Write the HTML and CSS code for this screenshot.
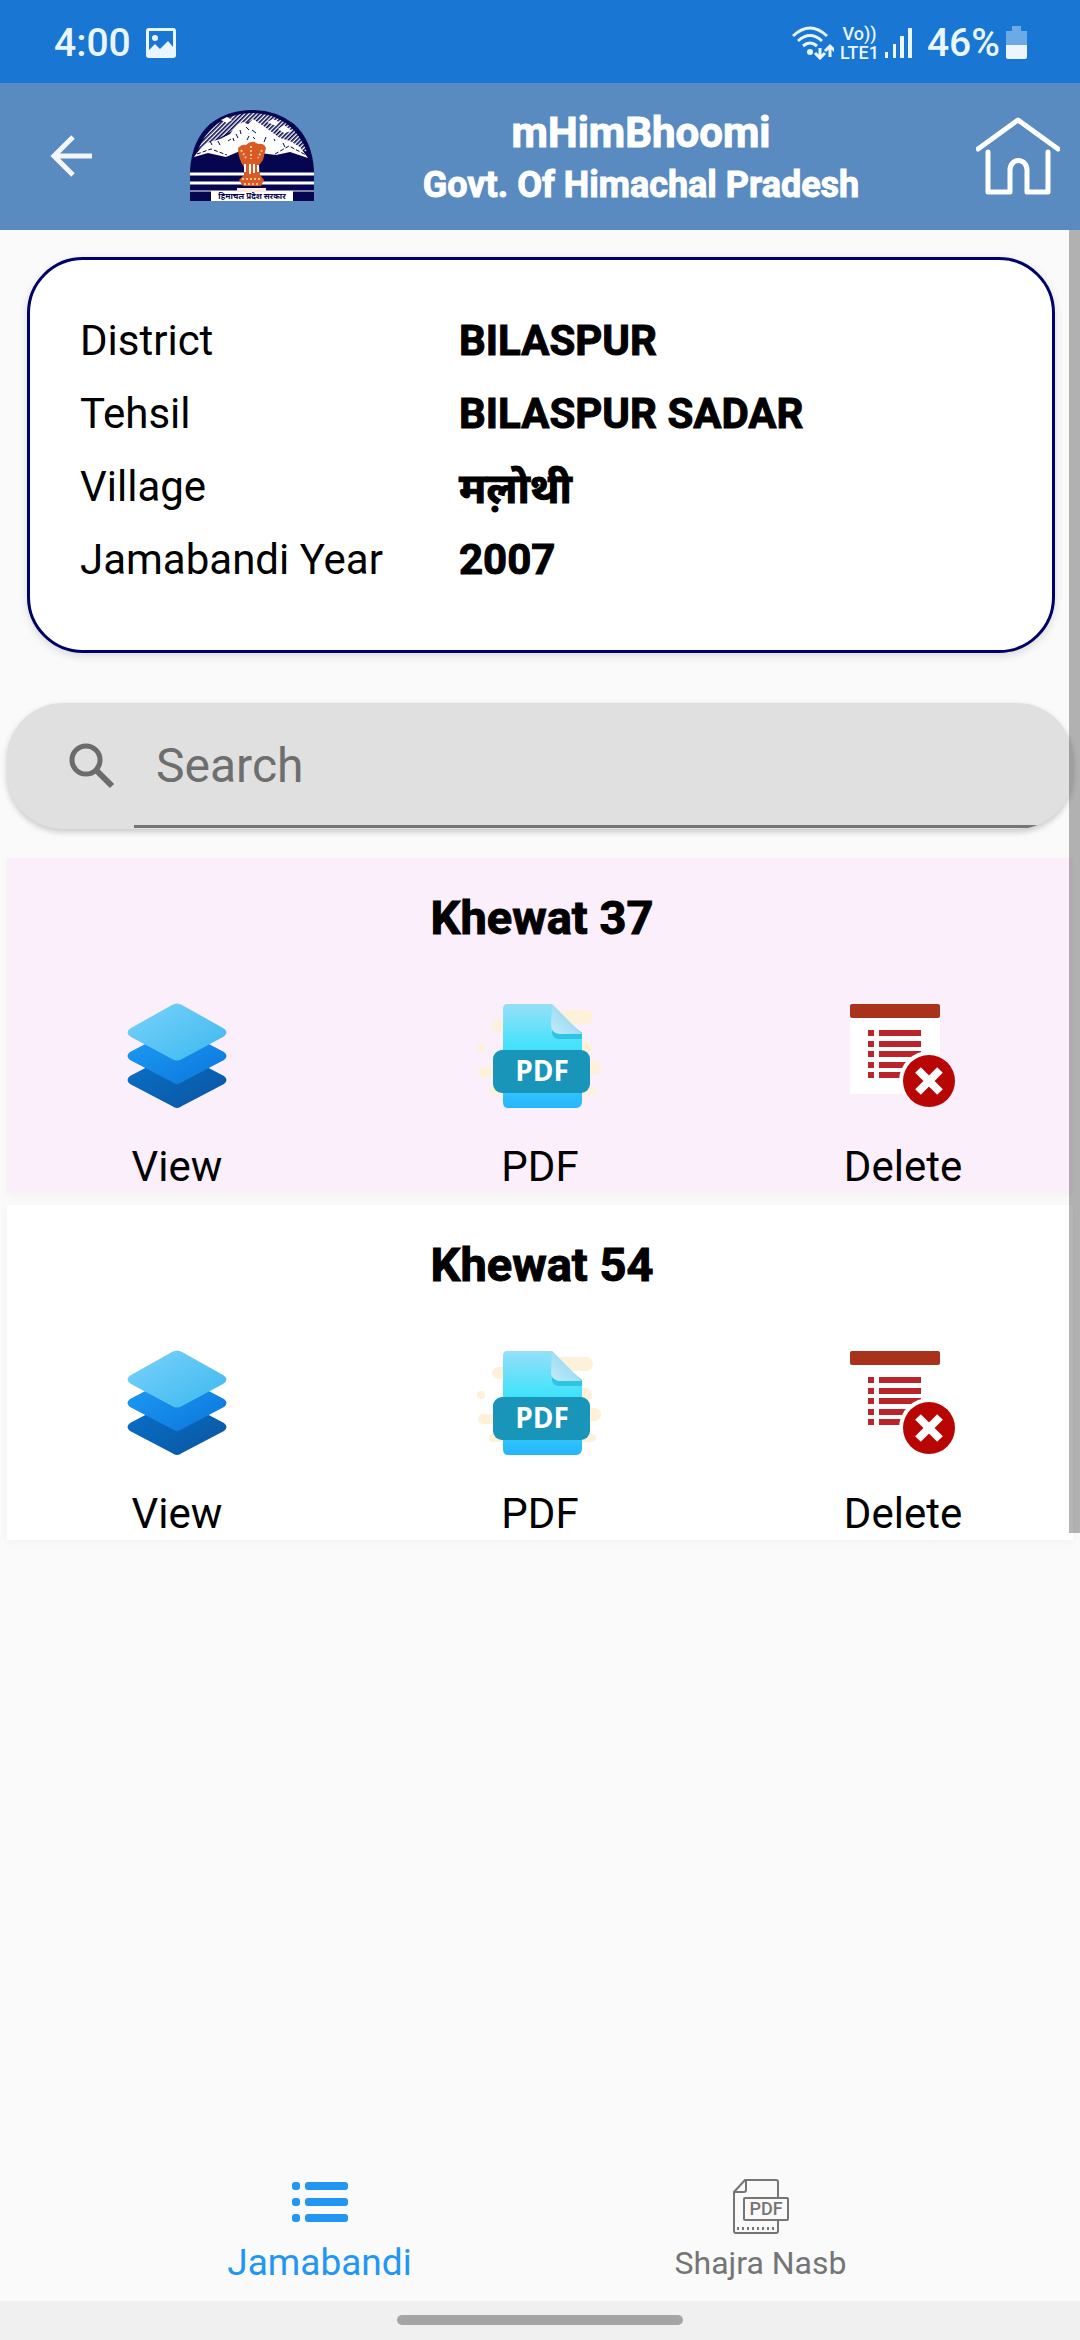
FILE: index.html
```html
<!DOCTYPE html>
<html lang="en">
<head>
<meta charset="utf-8">
<meta name="viewport" content="width=device-width, initial-scale=1">
<title>mHimBhoomi</title>
<link rel="stylesheet" href="styles.css">
</head>
<body>
<svg class="defs" aria-hidden="true">
  <defs>
    <linearGradient id="layer-top" x1="0" y1="0" x2="1" y2="1"><stop offset="0" stop-color="#7ad2fb"/><stop offset="1" stop-color="#3bb8ee"/></linearGradient>
    <linearGradient id="layer-mid" x1="0" y1="0" x2="1" y2="1"><stop offset="0" stop-color="#1f9df5"/><stop offset="1" stop-color="#0a76dc"/></linearGradient>
    <linearGradient id="layer-low" x1="0" y1="0" x2="1" y2="1"><stop offset="0" stop-color="#0772cc"/><stop offset="1" stop-color="#0c559f"/></linearGradient>
    <linearGradient id="sheet" x1="0" y1="0" x2="0" y2="1"><stop offset="0" stop-color="#97dff8"/><stop offset=".4" stop-color="#45e2fb"/><stop offset=".8" stop-color="#36c8fb"/><stop offset="1" stop-color="#24b6fb"/></linearGradient>
    <linearGradient id="fold" x1="0" y1="1" x2="1" y2="0"><stop offset="0" stop-color="#c4ebfa"/><stop offset="1" stop-color="#7fd0f0"/></linearGradient>
    <pattern id="hatch" width="3" height="3" patternUnits="userSpaceOnUse" patternTransform="rotate(45)"><rect width="3" height="3" fill="#fff"/><rect width="1.6" height="3" fill="#050550"/></pattern>
    <clipPath id="page"><rect y="1" width="90" height="90"/></clipPath>
    <symbol id="icon-view" viewBox="0 0 100 106">
      <path fill="url(#layer-low)" d="M3 73Q-2 77 3 81L45 103Q50 107 55 103L97 81Q102 77 97 73L55 51Q50 47 45 51Z"/>
      <path fill="url(#layer-mid)" d="M3 49Q-2 53 3 57L45 79Q50 83 55 79L97 57Q102 53 97 49L55 27Q50 23 45 27Z"/>
      <path fill="url(#layer-top)" d="M4 25Q-3 29 4 34L45 56Q50 59 55 56L96 34Q103 29 96 25L55 2Q50-1 45 2Z"/>
    </symbol>
    <symbol id="icon-pdf" viewBox="0 0 130 106">
      <g class="glow"><rect x="70" y="7" width="48" height="14" rx="7"/><rect x="17" y="17" width="20" height="12" rx="6"/><circle cx="6" cy="45" r="4"/><rect x="90" y="38" width="27" height="13" rx="6"/><rect x="100" y="58" width="26" height="13" rx="6"/><rect x="3" y="64" width="24" height="10" rx="5"/><rect x="14" y="84" width="107" height="8" rx="4"/></g>
      <path fill="url(#sheet)" d="M32 1H77L107 32V98Q107 105 101 105H33Q28 105 28 99V6Q28 1 32 1Z"/>
      <path fill="#2cc5e4" d="M77 6V30Q78 36 84 36H107V30Z"/>
      <path fill="url(#fold)" d="M77 1L107 31H84Q76 30 76 22Z"/>
      <rect x="18" y="47" width="97" height="43" rx="9" fill="#1a95ba"/>
      <text class="pdf-mark" x="67" y="78">PDF</text>
    </symbol>
    <symbol id="icon-delete" viewBox="0 0 106 106">
      <rect y="1" width="90" height="90" fill="#fff"/><rect y="1" width="90" height="14" rx="2" fill="#a9321b"/>
      <path fill="#b9252b" d="M18 27h6v6h-6zM18 38h6v6h-6zM18 48h6v6h-6zM18 59h6v6h-6zM18 69h6v6h-6zM29 27h42v6H29zM29 38h42v6H29zM29 48h42v6H29zM29 59h32v6H29zM29 69h24v6H29z"/>
      <circle cx="79" cy="78" r="30" fill="#fff" clip-path="url(#page)"/><circle cx="79" cy="78" r="26" fill="#b80604"/>
      <path d="M68 67l22 22M90 67L68 89" stroke="#fff" stroke-width="8"/>
    </symbol>
  </defs>
</svg>
<div class="app">
  <div class="status">
    <div class="status-side">
      <span class="clock">4:00</span>
      <svg width="32" height="32" viewBox="0 0 32 32"><path fill="#e9f5ff" fill-rule="evenodd" d="M4 1h24q3 0 3 3v24q0 3-3 3H4q-3 0-3-3V4q0-3 3-3zM4 4v19l6-6 5 5 8-8 5 6V4z"/><circle cx="10" cy="11" r="3" fill="#e9f5ff"/></svg>
    </div>
    <div class="status-side status-right">
      <svg width="42" height="34" viewBox="0 0 42 34" fill="none" stroke="#e9f5ff" stroke-width="3"><path d="M1 10Q18-6 35 10M6 15Q18 4 30 15M11 20Q18 14 25 20"/><circle cx="18" cy="26" r="3" fill="#e9f5ff" stroke="none"/><path d="M28 22v9M23 27l5 5 5-5M38 31V21M33 25l5-5 5 5"/></svg>
      <span class="lte"><span>Vo))</span><span>LTE1</span></span>
      <svg width="28" height="32" viewBox="0 0 28 32" fill="#e9f5ff"><path d="M0 25h3v6H0zM8 17h3v14H8zM15 9h4v22h-4zM23 1h4v30h-4z"/></svg>
      <span class="battery-text">46%</span>
      <svg width="22" height="34" viewBox="0 0 22 34"><path fill="#6ba9e7" d="M6 0h9v5h6v15H0V5h6z"/><path fill="#edf6ff" d="M0 19h21v12q0 2-2 2H2q-2 0-2-2z"/></svg>
    </div>
  </div>
  <header class="header">
    <button class="icon-button" aria-label="Back"><svg width="42" height="42" viewBox="0 0 42 42" fill="none" stroke="#f4f6fb" stroke-width="5"><path d="M42 21H4M23 2L4 21l19 19"/></svg></button>
    <svg class="emblem" width="124" height="92" viewBox="0 0 124 92">
      <path fill="#050550" d="M0 91V60Q2 30 20 14Q38 0 62 0Q86 0 104 14Q122 30 124 60V91Z"/>
      <path fill="url(#hatch)" d="M8 40Q14 24 27 14Q42 3 62 3Q82 3 97 14Q110 24 117 42L95 32 62 10 35 25Z"/>
      <path fill="#fff" d="M4 47Q10 38 17 33L30 29 40 24 47 15 53 12 58 14 63 9 75 17 83 23 90 28 100 31 110 37 118 48 100 42 86 45 70 43 50 41 36 47 18 43ZM31 10l6-3 5 3-5 3zM77 12l6-3 6 3-3 4zM88 19l6-4 8 6-8 2z"/>
      <path fill="none" stroke="#050550" stroke-dasharray="4 2" d="M7 44l14-5 16 6M85 44l14-8 17 9"/>
      <path fill="none" stroke="#050550" d="M46 24l2 4M50 20l1 4M56 17l3 3M62 20l4 3M57 30l2-4M63 27l2 2M20 31l2 4M28 31l2 4M76 27l-2 5M84 29l1 2M93 33l2 4M38 31l3-2M43 28l1 3"/>
      <path stroke="#fff" stroke-width="3" d="M0 64h124M0 73h124"/><path stroke="#fff" d="M0 81h124"/>
      <path fill="#d95a24" d="M48 38q4-4 8-3q6-6 12-1q6-1 8 4l-3 12-4 5 1 10 4 5-3 6H53l-4-6 5-5v-8q-6-8-6-19z"/>
      <path fill="none" stroke="#fbc59a" stroke-width="2" stroke-dasharray="2 2" d="M51 40l5 8M61 36v13M72 40l-4 8M52 69h20M54 74h16"/>
      <path stroke="#fff" stroke-width="2" d="M55 54v8M60 54v10M64 54v9M68 55v7"/>
      <rect x="21" y="81" width="82" height="10" fill="#fff"/><rect x="47" y="78" width="29" height="4" fill="#f7e8e2"/>
      <text class="emblem-text" x="62" y="89">हिमाचल प्रदेश सरकार</text>
    </svg>
    <div class="titles"><h1>mHimBhoomi</h1><p>Govt. Of Himachal Pradesh</p></div>
    <button class="icon-button" aria-label="Home"><svg width="84" height="78" viewBox="0 0 84 78" fill="none" stroke="#fff" stroke-width="5" stroke-linecap="round" stroke-linejoin="round"><path d="M2 32L42 3 82 32M12 35V75H34V53A8 9 0 0 1 51 53V75H72V35"/></svg></button>
  </header>
  <main class="content">
    <dl class="details">
      <dt>District</dt><dd>BILASPUR</dd>
      <dt>Tehsil</dt><dd>BILASPUR SADAR</dd>
      <dt>Village</dt><dd>मल़ोथी</dd>
      <dt>Jamabandi Year</dt><dd>2007</dd>
    </dl>
    <label class="search">
      <svg width="46" height="46" viewBox="0 0 46 46" fill="none" stroke="#6b6b6b"><circle cx="17" cy="17" r="14" stroke-width="5"/><path d="M28 28L43 43" stroke-width="6"/></svg>
      <input type="search" placeholder="Search" aria-label="Search">
    </label>
    <section class="khewat tinted">
      <h2>Khewat 37</h2>
      <div class="actions">
        <button><svg width="100" height="106"><use href="#icon-view"/></svg>View</button>
        <button><svg width="130" height="106"><use href="#icon-pdf"/></svg>PDF</button>
        <button><svg width="106" height="106"><use href="#icon-delete"/></svg>Delete</button>
      </div>
    </section>
    <section class="khewat">
      <h2>Khewat 54</h2>
      <div class="actions">
        <button><svg width="100" height="106"><use href="#icon-view"/></svg>View</button>
        <button><svg width="130" height="106"><use href="#icon-pdf"/></svg>PDF</button>
        <button><svg width="106" height="106"><use href="#icon-delete"/></svg>Delete</button>
      </div>
    </section>
    <div class="scrollbar"></div>
  </main>
  <nav class="tabs">
    <a class="active" href="#jamabandi"><svg width="56" height="56" viewBox="0 0 56 56" fill="#2196f3"><rect y="3" width="8" height="8" rx="3"/><rect x="13" y="3" width="43" height="8" rx="3"/><rect y="19" width="8" height="8" rx="3"/><rect x="13" y="19" width="43" height="8" rx="3"/><rect y="35" width="8" height="8" rx="3"/><rect x="13" y="35" width="43" height="8" rx="3"/></svg>Jamabandi</a>
    <a href="#shajra"><svg width="56" height="56" viewBox="0 0 56 56" fill="none" stroke="#757575" stroke-width="2"><path d="M45 18V3Q45 1 43 1H12L1 13V52Q1 54 3 54H43Q45 54 45 52V41M13 1V11Q13 13 11 13H1M5 48v3M10 48v3M15 48v3M20 48v3M25 48v3M30 48v3M35 48v3M40 48v3"/><rect x="11" y="19" width="44" height="22" rx="1"/><text class="tab-mark" x="33" y="36">PDF</text></svg>Shajra Nasb</a>
  </nav>
  <div class="gesture"><span></span></div>
</div>
</body>
</html>
```
FILE: styles.css
```css
* { box-sizing: border-box; margin: 0; padding: 0; }
body { background: #fafafa; color: #000; font-family: Roboto, "Noto Sans", sans-serif; font-size: 42px; }
button { border: 0; background: none; color: inherit; font: inherit; }
svg { display: block; flex: none; }
.defs { position: absolute; width: 0; height: 0; }
.app { display: flex; flex-direction: column; min-height: 100vh; }

.status { display: flex; justify-content: space-between; align-items: center; height: 83px; padding: 2px 52px 0 54px; background: #1976d2; color: #e9f5ff; }
.status-side { display: flex; align-items: center; gap: 14px; }
.status-right { gap: 6px; }
.clock, .battery-text { font-size: 39px; font-weight: 500; line-height: 48px; }
.battery-text { margin-left: 8px; }
.lte { display: flex; flex-direction: column; align-items: center; font-size: 18px; font-weight: 500; line-height: 19px; }

.header { display: flex; align-items: center; height: 147px; padding: 0 20px 2px 50px; background: #598bc1; color: #fff; }
.emblem { margin-left: 98px; }
.emblem-text { fill: #050550; font-size: 8px; font-weight: 700; text-anchor: middle; }
.titles { flex: 1; padding: 6px 8px 0 0; text-align: center; }
.titles h1 { font-size: 42px; line-height: 52px; -webkit-text-stroke: 1px; }
.titles p { font-size: 36px; font-weight: 700; line-height: 52px; -webkit-text-stroke: 1px; }

.content { position: relative; flex: 1; padding: 27px 7px 0; }
.details { display: grid; grid-template-columns: 379px 1fr; grid-auto-rows: 73px; align-items: center; min-height: 396px; margin: 0 18px 50px 20px; padding: 44px 50px; border: 3px solid #000066; border-radius: 56px; background: #fff; box-shadow: 0 3px 8px #0002; }
.details dd { font-weight: 700; -webkit-text-stroke: 1px; }

.search { display: flex; align-items: center; height: 126px; margin-bottom: 29px; padding: 0 36px 0 62px; border-radius: 56px; background: #e0e0e0; box-shadow: 0 3px 6px #0003; overflow: hidden; }
.search input { flex: 1; align-self: stretch; min-width: 0; margin: 0 0 1px 19px; padding: 2px 22px 0; border: 0; border-bottom: 3px solid #757575; outline: 0; background: none; font: 48px Roboto, sans-serif; }
.search input::placeholder { color: #6e6e6e; opacity: 1; }

.khewat { height: 335px; margin-bottom: 12px; padding-top: 28px; background: #fff; box-shadow: 0 3px 8px #00000008; }
.tinted { background: #fbeffc; }
.khewat h2 { padding-left: 4px; font-size: 47px; line-height: 64px; text-align: center; -webkit-text-stroke: 1px; }
.actions { display: grid; grid-template-columns: 340px 1fr 340px; margin-top: 53px; }
.actions button { display: flex; flex-direction: column; align-items: center; gap: 33px; line-height: 50px; }
.glow { fill: #fdf1d9; }
.scrollbar { position: absolute; top: 0; right: 0; width: 11px; height: 1303px; background: #0000004a; }

.tabs { display: flex; justify-content: center; padding-bottom: 14px; }
.tabs a { display: flex; flex-direction: column; align-items: center; gap: 4px; width: 441px; color: #757575; font-size: 32px; line-height: 48px; text-decoration: none; }
.tabs .active { color: #2196f3; font-size: 37px; }
.pdf-mark { fill: #fff; font: 700 28px "Open Sans", sans-serif; text-anchor: middle; }
.tab-mark { fill: #757575; stroke: none; font: 500 18px Roboto, sans-serif; text-anchor: middle; }
.gesture { display: flex; justify-content: center; height: 39px; padding-top: 14px; background: #f0f0f0; }
.gesture span { width: 286px; height: 10px; border-radius: 5px; background: #a5a5a5; }
```
